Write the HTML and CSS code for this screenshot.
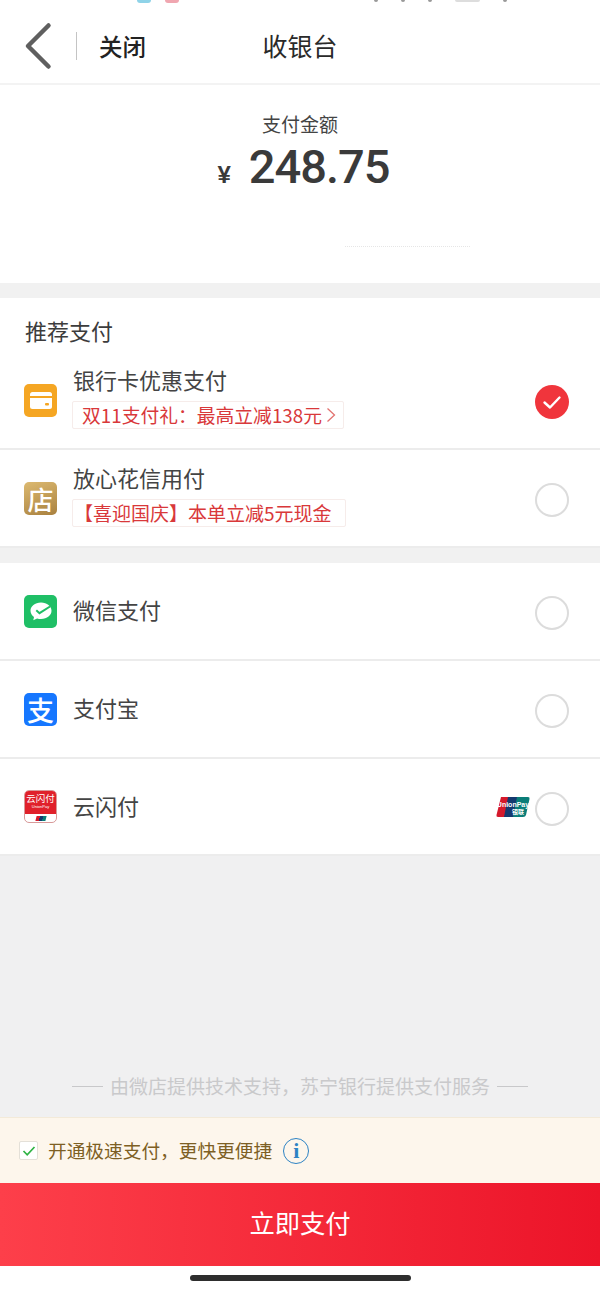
FILE: index.html
```html
<!DOCTYPE html>
<html lang="zh-CN">
<head>
  <meta charset="UTF-8" />
  <meta name="viewport" content="width=device-width, initial-scale=1.0"/>
  <title>收银台</title>
  <link rel="stylesheet" href="styles.css">
</head>
<body>
  <div class="page">
    <div class="status-strip">
      <span class="dot dot-blue"></span>
      <span class="dot dot-pink"></span>
      <span class="status-gap"></span>
      <span class="dot dot-dark"></span>
      <span class="dot dot-dark"></span>
      <span class="dot dot-dark"></span>
      <span class="dot dot-dark dot-wide"></span>
      <span class="dot dot-dark"></span>
    </div>

    <header class="top-bar">
      <a class="back" href="#" aria-label="返回">
        <svg width="30" height="50" viewBox="0 0 30 50">
          <path d="M25.500 4.500 L5 25 L25.500 45.500" fill="none" stroke="#5f5f5f" stroke-width="4.500" stroke-linecap="round" stroke-linejoin="round"/>
        </svg>
      </a>
      <span class="top-divider"></span>
      <a class="close" href="#">关闭</a>
      <h1 class="top-title">收银台</h1>
    </header>

    <section class="amount">
      <p class="amount-label">支付金额</p>
      <p class="amount-value"><span class="yen">¥</span><span class="num">248.75</span></p>
      <div class="amount-trace"></div>
    </section>

    <section class="group">
      <h2 class="group-title">推荐支付</h2>

      <div class="row row-first">
        <span class="icon icon-card">
          <svg width="32" height="32" viewBox="0 0 32 32">
            <rect x="5" y="8" width="22" height="17" rx="2.500" fill="#fff"/>
            <rect x="5" y="12" width="22" height="2" fill="#f5a623"/>
            <rect x="20" y="19" width="4" height="2.500" rx="1" fill="#f5a623"/>
          </svg>
        </span>
        <div class="row-text">
          <div class="row-name">银行卡优惠支付</div>
          <div class="tag">双11支付礼：最高立减138元<svg class="tag-arrow" width="10" height="16" viewBox="0 0 10 16"><path d="M1.500 1.500 L8.500 8 L1.500 14.500" fill="none" stroke="#e2726f" stroke-width="1.300"/></svg></div>
        </div>
        <span class="radio radio-on">
          <svg width="34" height="34" viewBox="0 0 34 34">
            <path d="M9.500 17.500 L15 22.500 L24.500 12.500" fill="none" stroke="#fff" stroke-width="2.400" stroke-linecap="round" stroke-linejoin="round"/>
          </svg>
        </span>
      </div>

      <div class="row row-tagged">
        <span class="icon icon-shop">店</span>
        <div class="row-text">
          <div class="row-name">放心花信用付</div>
          <div class="tag tag-wide">【喜迎国庆】本单立减5元现金</div>
        </div>
        <span class="radio"></span>
      </div>
    </section>

    <section class="group group-others">
      <div class="row row-plain">
        <span class="icon icon-wechat">
          <svg width="32" height="32" viewBox="0 0 32 32">
            <path d="M16 7.500 C9.900 7.500 5.500 11.200 5.500 15.800 C5.500 18.300 6.900 20.500 9 22 L8.300 25.200 L12.100 23.400 C13.300 23.800 14.600 24 16 24 C22.100 24 26.500 20.400 26.500 15.800 C26.500 11.200 22.100 7.500 16 7.500 Z" fill="#fff"/>
            <path d="M11.300 15.300 L14.500 18.200 L25 11.500" fill="none" stroke="#1fbf66" stroke-width="2"/>
          </svg>
        </span>
        <div class="row-name">微信支付</div>
        <span class="radio"></span>
      </div>

      <div class="row row-plain">
        <span class="icon icon-alipay">支</span>
        <div class="row-name">支付宝</div>
        <span class="radio"></span>
      </div>

      <div class="row row-last">
        <span class="icon icon-yunshan">
          <span class="ys-top">云闪付<small class="ys-sub">UnionPay</small></span>
          <span class="ys-bottom"><i class="ys-card"></i></span>
        </span>
        <div class="row-name">云闪付</div>
        <span class="unionpay">
          <svg width="34" height="20" viewBox="0 0 34 20">
            <path d="M5 0 H14 L10 20 H2 Q0 20 .5 18 Z" fill="#d5192c"/>
            <path d="M12 0 H23 L19 20 H8 Z" fill="#14396f"/>
            <path d="M21 0 H32 Q34 0 33.500 2 L30 18 Q29.500 20 27 20 H17 Z" fill="#0a7d78"/>
            <text x="17" y="10" text-anchor="middle" class="up-en">UnionPay</text>
            <text x="22" y="17" text-anchor="middle" class="up-cn">银联</text>
          </svg>
        </span>
        <span class="radio"></span>
      </div>
    </section>

    <div class="spacer">
      <p class="provider"><span class="dash"></span>由微店提供技术支持，苏宁银行提供支付服务<span class="dash"></span></p>
    </div>

    <div class="fast-pay">
      <span class="check">
        <svg width="14" height="12" viewBox="0 0 14 12">
          <path d="M1.500 6 L5.200 9.800 L12.500 2" fill="none" stroke="#2fb344" stroke-width="1.700"/>
        </svg>
      </span>
      <span class="fast-text">开通极速支付，更快更便捷</span>
      <span class="info">i</span>
    </div>

    <button class="pay-btn" type="button">立即支付</button>

    <div class="home-area"><span class="home-bar"></span></div>
  </div>
</body>
</html>
```

FILE: styles.css
```css
* {
  box-sizing: border-box;
  margin: 0;
  padding: 0;
}

body {
  font-family: "Noto Sans CJK SC", "Noto Sans", sans-serif;
  background-color: #fff;
  color: #333;
}

.page {
  display: flex;
  flex-direction: column;
  width: 600px;
  height: 1290px;
  overflow: hidden;
}

.status-strip {
  display: flex;
  height: 3px;
  padding-left: 137px;
}

.dot {
  width: 14px;
  height: 3px;
  border-radius: 0 0 5px 5px;
}

.dot-blue {
  background-color: #8fd3e8;
}

.dot-pink {
  margin-left: 14px;
  background-color: #f0a6b0;
}

.status-gap {
  width: 172px;
}

.dot-dark {
  width: 4px;
  height: 2px;
  margin-left: 23px;
  background-color: #999;
}

.dot-wide {
  width: 25px;
  background-color: #ddd;
}

.top-bar {
  position: relative;
  display: flex;
  align-items: center;
  height: 82px;
  padding: 6px 0 0 23px;
  border-bottom: 2px solid #f3f3f3;
}

.back {
  display: block;
  height: 50px;
}

.top-divider {
  width: 1px;
  height: 28px;
  margin-left: 23px;
  background-color: #c4c4c4;
}

.close {
  margin-left: 22px;
  font-size: 23.500px;
  font-weight: 500;
  line-height: 32px;
  color: #222;
  text-decoration: none;
}

.top-title {
  position: absolute;
  left: 0;
  right: 0;
  top: 24px;
  font-size: 25px;
  font-weight: 400;
  line-height: 36px;
  text-align: center;
  color: #2a2a2a;
}

.amount {
  height: 198px;
  padding-top: 25px;
  text-align: center;
}

.amount-label {
  font-size: 19px;
  line-height: 28px;
  color: #444;
}

.amount-value {
  display: flex;
  justify-content: center;
  align-items: baseline;
  gap: 18px;
  height: 54px;
  margin-top: 2px;
  padding-left: 7px;
  line-height: 54px;
  color: #3a3a3a;
}

.yen {
  font-family: "Liberation Sans", sans-serif;
  font-size: 24px;
  font-weight: 700;
}

.num {
  font-family: Roboto, sans-serif;
  font-size: 47px;
  font-weight: 500;
  letter-spacing: -1px;
}

.amount-trace {
  width: 125px;
  height: 0;
  margin: 52px 0 0 345px;
  border-top: 1px dotted #e6e6e6;
}

.group {
  border-top: 15px solid #f1f1f1;
  background-color: #fff;
}

.group-title {
  padding: 16px 0 3px 25px;
  font-size: 22px;
  font-weight: 400;
  line-height: 32px;
  color: #3c3c3c;
}

.row {
  display: flex;
  align-items: center;
  padding: 0 31px 0 24px;
  border-bottom: 2px solid #ececec;
}

.row-first {
  height: 101px;
}

.row-first .icon {
  margin-top: 3px;
}

.row-first .row-text {
  margin-bottom: 3px;
}

.row-first .radio {
  margin-top: 7px;
}

.row-tagged {
  height: 98px;
}

.row-tagged .row-text {
  margin-bottom: 6px;
}

.row-plain {
  height: 98px;
}

.row-last {
  height: 97px;
}

.icon {
  display: flex;
  align-items: center;
  justify-content: center;
  flex: none;
  width: 33px;
  height: 33px;
  margin-right: 16px;
  border-radius: 5px;
}

.icon-card {
  background-color: #f5a623;
}

.icon-shop {
  background: linear-gradient(160deg, #dcb970, #a9813f);
  font-size: 26px;
  font-weight: 500;
  line-height: 33px;
  color: #fff;
}

.icon-wechat {
  background-color: #1fbf66;
}

.icon-alipay {
  background-color: #1677ff;
  font-size: 27px;
  font-weight: 500;
  line-height: 33px;
  color: #fff;
}

.icon-yunshan {
  flex-direction: column;
  border: 1px solid #d89a9a;
  background-color: #fff;
  overflow: hidden;
}

.ys-top {
  display: flex;
  flex-direction: column;
  align-items: center;
  width: 100%;
  height: 23px;
  padding-top: 2px;
  background-color: #e0212b;
  font-size: 9.500px;
  line-height: 11px;
  color: #fff;
}

.ys-sub {
  font-family: "Liberation Sans", sans-serif;
  font-size: 4px;
  line-height: 6px;
}

.ys-bottom {
  display: flex;
  flex: 1;
  align-items: center;
  justify-content: center;
  width: 100%;
}

.ys-card {
  width: 10px;
  height: 5px;
  background: linear-gradient(90deg, #d5192c 33%, #14396f 33%, #14396f 66%, #0a7d78 66%);
  transform: skewX(-14deg);
}

.row-text {
  flex: 1;
}

.row-name {
  flex: 1;
  margin: -2px 0 2px;
  font-size: 22px;
  line-height: 32px;
  color: #444;
}

.tag {
  display: inline-flex;
  align-items: center;
  gap: 4px;
  width: 272px;
  height: 28px;
  margin-top: 4px;
  margin-left: -1px;
  padding-left: 9px;
  border: 1px solid #f6ecea;
  border-radius: 2px;
  font-size: 18.800px;
  line-height: 26px;
  white-space: nowrap;
  color: #d9383a;
}

.tag-wide {
  width: 274px;
  padding-left: 1px;
  font-size: 19px;
}

.radio {
  display: block;
  flex: none;
  width: 34px;
  height: 34px;
  margin-top: 4px;
  border: 2px solid #dcdcdc;
  border-radius: 50%;
}

.radio-on {
  border: none;
  background-color: #f0353c;
}

.unionpay {
  display: block;
  height: 20px;
  margin-right: 5px;
}

.up-en {
  font-family: "Liberation Sans", sans-serif;
  font-size: 7px;
  font-weight: 700;
  fill: #fff;
}

.up-cn {
  font-size: 6px;
  font-weight: 700;
  fill: #fff;
}

.spacer {
  display: flex;
  flex: 1;
  align-items: flex-end;
  justify-content: center;
  padding-bottom: 17px;
  background-color: #f0f0f1;
}

.provider {
  display: flex;
  align-items: center;
  gap: 7px;
  font-size: 19px;
  line-height: 28px;
  color: #c9c9cb;
}

.dash {
  width: 31px;
  height: 1px;
  background-color: #c8c8ca;
}

.fast-pay {
  display: flex;
  align-items: center;
  height: 66px;
  padding-left: 19px;
  border-top: 1px solid #f3ead9;
  background-color: #fdf6ec;
}

.check {
  display: flex;
  align-items: center;
  justify-content: center;
  width: 19px;
  height: 19px;
  margin-right: 10px;
  border: 1px solid #e4e0d8;
  border-radius: 2px;
  background-color: #fff;
}

.fast-text {
  margin-bottom: 2px;
  font-size: 18.700px;
  line-height: 28px;
  color: #7d5f24;
}

.info {
  display: flex;
  align-items: center;
  justify-content: center;
  width: 26px;
  height: 26px;
  margin-left: 11px;
  border: 1.500px solid #2d83c4;
  border-radius: 50%;
  font-family: "Liberation Serif", serif;
  font-size: 22px;
  font-weight: 700;
  color: #2d83c4;
}

.pay-btn {
  flex: none;
  height: 83px;
  padding-bottom: 5px;
  border: none;
  background: linear-gradient(90deg, #fd3f4a, #ec1429);
  font-family: inherit;
  font-size: 25.300px;
  color: #fff;
}

.home-area {
  display: flex;
  flex: none;
  justify-content: center;
  height: 24px;
  padding-top: 9px;
}

.home-bar {
  width: 221px;
  height: 6px;
  border-radius: 3px;
  background-color: #2e2e2e;
}
```
